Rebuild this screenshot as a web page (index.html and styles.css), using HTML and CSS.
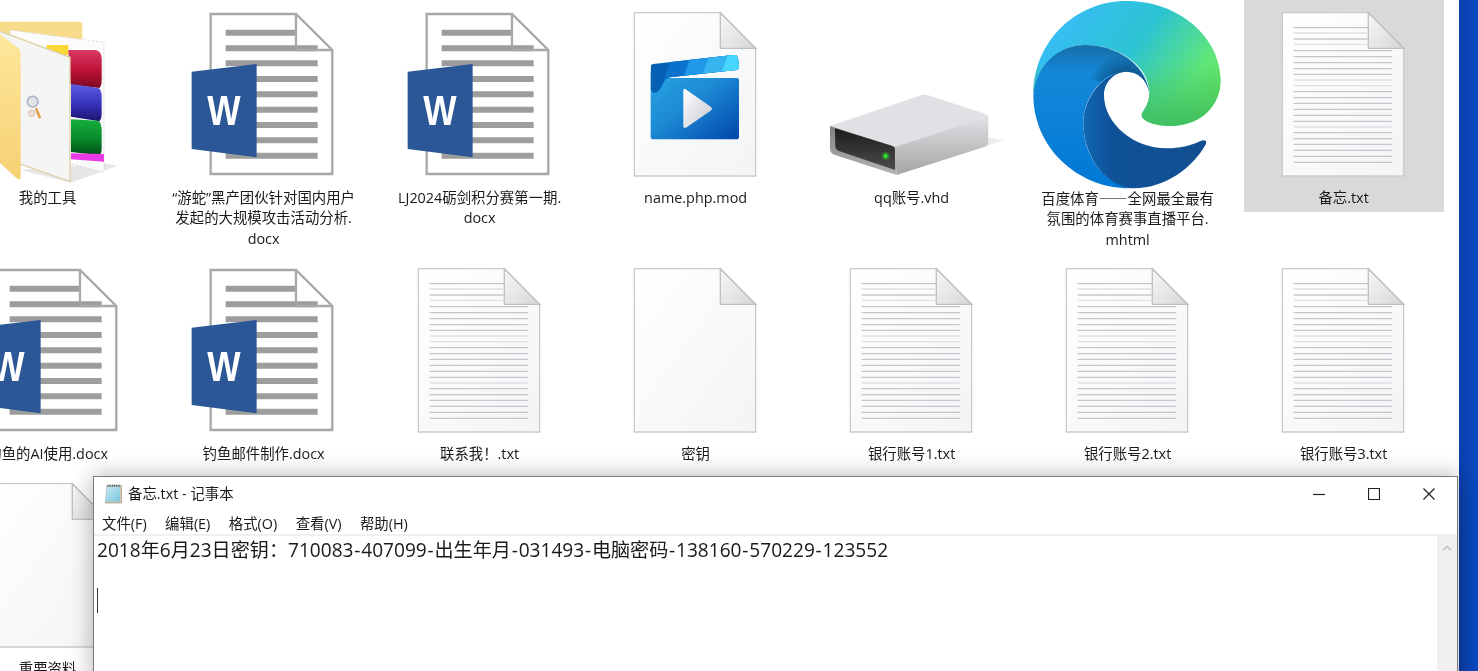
FILE: index.html
```html
<!DOCTYPE html>
<html lang="zh-CN">
<head>
     <meta charset="UTF-8">
     <meta name="viewport" content="width=device-width, initial-scale=1.0">
     <title>备忘.txt - 记事本</title>
     <link rel="stylesheet" href="styles.css">
</head>
<body>
     <!-- icons used more than once -->
     <svg class="defs" aria-hidden="true">
          <defs>
               <linearGradient id="paper" x1="0" y1="0" x2="1" y2="1">
                    <stop offset="0" stop-color="#ffffff"/>
                    <stop offset="1" stop-color="#f3f4f6"/>
               </linearGradient>
               <linearGradient id="fold" x1="0" y1="0" x2="1" y2="1">
                    <stop offset="0" stop-color="#f8f8f8"/>
                    <stop offset="1" stop-color="#d6d6d6"/>
               </linearGradient>
               <linearGradient id="video-body" x1="0" y1="0" x2="1" y2="1">
                    <stop offset="0" stop-color="#2aa6e2"/>
                    <stop offset=".45" stop-color="#1c8ad4"/>
                    <stop offset="1" stop-color="#0046ab"/>
               </linearGradient>
               <linearGradient id="play" x1="0" y1="0" x2="1" y2="1">
                    <stop offset="0" stop-color="#ffffff"/>
                    <stop offset="1" stop-color="#c4c8cf"/>
               </linearGradient>
               <clipPath id="clapper-shape">
                    <path d="M92 200Q92 193 100 192L340 165Q352 164 354 175L357 200Q358 208 348 210L150 232Q135 235 130 250L120 268Q112 280 100 278Q92 275 92 265Z"/>
               </clipPath>
               <linearGradient id="hdd-side" x1="0" y1="0" x2="0" y2="1">
                    <stop offset="0" stop-color="#e0e1e4"/>
                    <stop offset="1" stop-color="#a4a4a6"/>
               </linearGradient>
               <linearGradient id="hdd-front" x1="0" y1="0" x2="0" y2="1">
                    <stop offset="0" stop-color="#808080"/>
                    <stop offset="1" stop-color="#b4b4b4"/>
               </linearGradient>
               <linearGradient id="hdd-dark" x1="0" y1="0" x2="0" y2="1">
                    <stop offset="0" stop-color="#1c1c1c"/>
                    <stop offset="1" stop-color="#4c4c4c"/>
               </linearGradient>
               <linearGradient id="edge-top" x1="0" y1=".2" x2="1" y2=".7">
                    <stop offset="0" stop-color="#3abcfd"/>
                    <stop offset=".5" stop-color="#2cc3d2"/>
                    <stop offset=".85" stop-color="#5fe67a"/>
                    <stop offset="1" stop-color="#62e460"/>
               </linearGradient>
               <linearGradient id="edge-low" x1="0" y1="0" x2="0" y2="1">
                    <stop offset=".5" stop-color="#3fbf62" stop-opacity="0"/>
                    <stop offset="1" stop-color="#3fbf62"/>
               </linearGradient>
               <linearGradient id="edge-blue" x1="0" y1="0" x2="0" y2="1">
                    <stop offset="0" stop-color="#166fa8"/>
                    <stop offset=".2" stop-color="#1488d8"/>
                    <stop offset="1" stop-color="#0078d6"/>
               </linearGradient>
               <radialGradient id="edge-shade" gradientUnits="userSpaceOnUse" cx="320" cy="285" r="125">
                    <stop offset=".55" stop-color="#0c4a78" stop-opacity=".75"/>
                    <stop offset="1" stop-color="#0c4a78" stop-opacity="0"/>
               </radialGradient>
               <linearGradient id="edge-dark" x1="0" y1="0" x2="1" y2="0">
                    <stop offset="0" stop-color="#1068b4"/>
                    <stop offset=".22" stop-color="#0f5298"/>
                    <stop offset="1" stop-color="#124f90"/>
               </linearGradient>
               <linearGradient id="red" x1="0" y1="0" x2="0" y2="1">
                    <stop offset="0" stop-color="#d93a62"/>
                    <stop offset=".55" stop-color="#bc1038"/>
                    <stop offset="1" stop-color="#7c0a20"/>
               </linearGradient>
               <linearGradient id="violet" x1="0" y1="0" x2="0" y2="1">
                    <stop offset="0" stop-color="#5d5de4"/>
                    <stop offset=".55" stop-color="#3532b8"/>
                    <stop offset="1" stop-color="#1c1470"/>
               </linearGradient>
               <linearGradient id="green" x1="0" y1="0" x2="0" y2="1">
                    <stop offset="0" stop-color="#14ae3a"/>
                    <stop offset=".55" stop-color="#0a8a2c"/>
                    <stop offset="1" stop-color="#004c16"/>
               </linearGradient>
               <linearGradient id="folder" x1="0" y1="0" x2="0" y2="1">
                    <stop offset="0" stop-color="#fee89c"/>
                    <stop offset="1" stop-color="#f6d074"/>
               </linearGradient>
               <linearGradient id="pad" x1="0" y1="0" x2="1" y2="1">
                    <stop offset="0" stop-color="#c4eaf4"/>
                    <stop offset="1" stop-color="#7cc4dc"/>
               </linearGradient>
          </defs>

          <symbol id="page" viewBox="0 0 200 188">
               <g transform="translate(-224 0) scale(.3333)">
                    <path class="page-sheet" d="M787 38H1045L1151 145V528H787Z"/>
                    <path class="page-fold" d="M1045 38V145H1151Z"/>
               </g>
          </symbol>

          <symbol id="txt" viewBox="0 0 200 188">
               <use href="#page"/>
               <g transform="translate(-224 0) scale(.3333)">
                    <path class="txt-dark" d="M821 83H1045M821 117H1045M821 152H1117M821 170H1117M821 188H1117M821 206H1117M821 223H1117M821 275H1117M821 293H1117M821 310H1117M821 328H1117M821 346H1117M821 364H1117M821 398H1117M821 416H1117M821 433H1117M821 451H1117M821 469H1117M821 487H1117"/>
                    <path class="txt-light" d="M821 99H1045M821 133H1045M821 240H1117M821 257H1117M821 381H1117"/>
               </g>
          </symbol>

          <symbol id="word" viewBox="0 0 200 188">
               <g transform="translate(-164 0) scale(.3333)">
                    <path class="word-sheet" d="M632 42H888L997 150V522H632Z"/>
                    <path class="word-lines" d="M677 98H888M677 145H953M677 190H953M677 237H953M677 283H953M677 329H953M677 375H953M677 421H953M677 467H953"/>
                    <path class="word-sheet-fold" d="M888 42V150H997"/>
                    <path class="word-cover" d="M575 215L770 192V472L575 447Z"/>
                    <text class="word-w" x="622" y="376" textLength="100" lengthAdjust="spacingAndGlyphs">W</text>
               </g>
          </symbol>
     </svg>

     <div class="desktop">
          <div class="explorer">
               <div class="file-grid">
                    <div class="file">
                         <svg class="file-icon" viewBox="0 0 200 188">
                              <g transform="translate(52 0) scale(.3333)">
                                   <path class="folder-shadow" d="M62 510L212 548L352 498L312 490Z"/>
                                   <path class="folder-back" d="M-10 65H238Q247 65 247 75V150H-10Z"/>
                                   <path class="folder-sheet" d="M30 90L312 127V517L210 490L30 450Z"/>
                                   <path class="folder-tag" d="M140 135H205V165H140Z"/>
                                   <path fill="url(#red)" d="M205 150H288Q305 155 305 175V240Q305 258 298 264L212 254Z"/>
                                   <path fill="url(#violet)" d="M213 252L295 264Q305 270 305 290V340Q305 358 298 364L213 350Z"/>
                                   <path fill="url(#green)" d="M213 358L295 362Q305 370 305 390V445Q305 462 298 466L213 456Z"/>
                                   <path class="folder-strip" d="M213 460L312 462V485L213 478Z"/>
                                   <path class="folder-front" d="M-5 92L210 172V545L55 490L-5 470Z"/>
                                   <path fill="url(#folder)" d="M-10 95L55 145Q62 150 62 165V530Q62 545 50 535L-10 480Z"/>
                                   <circle class="lens" cx="98" cy="305" r="16"/>
                                   <circle class="lens-low" cx="95" cy="340" r="10"/>
                                   <path class="lens-handle" d="M108 325L120 355"/>
                              </g>
                         </svg>
                         <div class="file-name">我的工具</div>
                    </div>
                    <div class="file">
                         <svg class="file-icon"><use href="#word"/></svg>
                         <div class="file-name">“游蛇”黑产团伙针对国内用户<br>发起的大规模攻击活动分析.<br>docx</div>
                    </div>
                    <div class="file">
                         <svg class="file-icon"><use href="#word"/></svg>
                         <div class="file-name">LJ2024砺剑积分赛第一期.<br>docx</div>
                    </div>
                    <div class="file">
                         <svg class="file-icon" viewBox="0 0 200 188">
                              <use href="#page"/>
                              <g transform="translate(24 0) scale(.3333)">
                                   <path fill="url(#video-body)" d="M92 215H135V234H351Q357 234 357 240V412Q357 418 351 418H98Q92 418 92 412Z"/>
                                   <g clip-path="url(#clapper-shape)">
                                        <path class="stripe-1" d="M80 150H370V290H80Z"/>
                                        <path class="stripe-2" d="M160 160H370V240H132Z"/>
                                        <path class="stripe-3" d="M215 160H370V240H187Z"/>
                                        <path class="stripe-4" d="M270 160H370V240H242Z"/>
                                        <path class="stripe-5" d="M325 160H370V240H297Z"/>
                                   </g>
                                   <path fill="url(#play)" d="M190 272Q190 262 200 270L272 320Q280 326 272 332L200 382Q190 388 190 378Z"/>
                              </g>
                         </svg>
                         <div class="file-name">name.php.mod</div>
                    </div>
                    <div class="file">
                         <svg class="file-icon" viewBox="0 0 200 188">
                              <g transform="translate(-192 0) scale(.3333)">
                                   <path class="hdd-shadow" d="M1105 412L1150 420L1105 437Z"/>
                                   <path class="hdd-top" d="M630 378L905 285Q915 282 925 286L1090 340Q1105 345 1105 352L825 440Z"/>
                                   <path fill="url(#hdd-side)" d="M825 440L1105 350V430Q1105 437 1095 440L830 525Z"/>
                                   <path fill="url(#hdd-front)" d="M630 378L825 440L830 525L645 465Q630 460 630 445Z"/>
                                   <path fill="url(#hdd-dark)" d="M645 385L815 437Q825 440 825 450V510L655 452Q646 448 646 440Z"/>
                                   <circle class="led-glow" cx="797" cy="468" r="12"/>
                                   <circle class="led" cx="797" cy="468" r="6"/>
                              </g>
                         </svg>
                         <div class="file-name">qq账号.vhd</div>
                    </div>
                    <div class="file">
                         <svg class="file-icon" viewBox="0 0 200 188">
                              <g transform="translate(-8 0) scale(.3333)">
                                   <path fill="url(#edge-top)" d="M40 280C42 125 165 3 320 3C480 3 602 115 602 240C602 320 540 378 450 378C410 378 365 365 365 345C365 332 388 318 388 278C388 200 300 135 195 135C120 135 60 190 40 280Z"/>
                                   <path fill="url(#edge-low)" d="M40 280C42 125 165 3 320 3C480 3 602 115 602 240C602 320 540 378 450 378C410 378 365 365 365 345C365 332 388 318 388 278C388 200 300 135 195 135C120 135 60 190 40 280Z"/>
                                   <path fill="url(#edge-blue)" d="M40 285C50 190 120 135 195 135C290 135 375 190 388 278C380 240 355 215 320 215C260 215 190 280 190 370C190 470 250 545 330 565C170 565 40 440 40 285Z"/>
                                   <path fill="url(#edge-shade)" d="M195 135C290 135 375 190 388 278C380 240 355 215 320 215C290 215 262 226 240 245L190 230Z"/>
                                   <path fill="url(#edge-dark)" d="M320 215C260 212 190 285 190 370C190 480 270 565 340 565C440 565 520 500 558 432C562 420 552 418 540 424C510 438 480 445 440 445C340 445 252 370 252 285C252 245 285 215 320 215Z"/>
                              </g>
                         </svg>
                         <div class="file-name">百度体育<span class="dash">——</span>全网最全最有<br>氛围的体育赛事直播平台.<br>mhtml</div>
                    </div>
                    <div class="file selected">
                         <svg class="file-icon"><use href="#txt"/></svg>
                         <div class="file-name">备忘.txt</div>
                    </div>

                    <div class="file">
                         <svg class="file-icon"><use href="#word"/></svg>
                         <div class="file-name">钓鱼的AI使用.docx</div>
                    </div>
                    <div class="file">
                         <svg class="file-icon"><use href="#word"/></svg>
                         <div class="file-name">钓鱼邮件制作.docx</div>
                    </div>
                    <div class="file">
                         <svg class="file-icon"><use href="#txt"/></svg>
                         <div class="file-name">联系我！.txt</div>
                    </div>
                    <div class="file">
                         <svg class="file-icon"><use href="#page"/></svg>
                         <div class="file-name">密钥</div>
                    </div>
                    <div class="file">
                         <svg class="file-icon"><use href="#txt"/></svg>
                         <div class="file-name">银行账号1.txt</div>
                    </div>
                    <div class="file">
                         <svg class="file-icon"><use href="#txt"/></svg>
                         <div class="file-name">银行账号2.txt</div>
                    </div>
                    <div class="file">
                         <svg class="file-icon"><use href="#txt"/></svg>
                         <div class="file-name">银行账号3.txt</div>
                    </div>

                    <div class="file">
                         <svg class="file-icon"><use href="#page"/></svg>
                         <div class="file-name">重要资料</div>
                    </div>
               </div>
          </div>
          <div class="wallpaper"></div>

          <div class="notepad">
               <div class="notepad-title">
                    <svg class="notepad-icon" viewBox="0 0 18 20">
                         <path class="pad-edge" d="M3 1.5H17.5V19H1.5Z"/>
                         <path fill="url(#pad)" d="M3 2.5H16V17.5H1.5Z"/>
                         <path class="pad-rings" d="M4 .5V3M6.2 .5V3M8.4 .5V3M10.6 .5V3M12.8 .5V3M15 .5V3"/>
                    </svg>
                    <span class="notepad-name">备忘.txt - 记事本</span>
                    <div class="window-buttons">
                         <svg class="window-btn" viewBox="0 0 12 12"><path d="M0 6.5H12"/></svg>
                         <svg class="window-btn" viewBox="0 0 12 12"><path d="M.5 .5H11.5V11.5H.5Z"/></svg>
                         <svg class="window-btn" viewBox="0 0 12 12"><path d="M.5 .5L11.5 11.5M11.5 .5L.5 11.5"/></svg>
                    </div>
               </div>
               <div class="notepad-menu">
                    <span>文件(F)</span>
                    <span>编辑(E)</span>
                    <span>格式(O)</span>
                    <span>查看(V)</span>
                    <span>帮助(H)</span>
               </div>
               <div class="notepad-body">
                    <div class="notepad-text">
                         <div class="text-line">2018年6月23日密钥：710083<span class="hy">-</span>407099<span class="hy">-</span>出生年月<span class="hy">-</span>031493<span class="hy">-</span>电脑密码<span class="hy">-</span>138160<span class="hy">-</span>570229<span class="hy">-</span>123552</div>
                         <div class="text-line"></div>
                         <div class="text-line"><span class="caret"></span></div>
                    </div>
                    <div class="scrollbar">
                         <svg class="scroll-up" viewBox="0 0 10 6"><path d="M1 5L5 1.5L9 5"/></svg>
                    </div>
               </div>
          </div>
     </div>
</body>
</html>
```

FILE: styles.css
```css
html, body{
     margin: 0;
     height: 100%;
     overflow: hidden;
     background: white;
}
.defs{
     position: absolute;
     width: 0;
     height: 0;
}
.desktop{
     position: relative;
     display: flex;
     height: 671px;
     overflow: hidden;
     font-family: "Open Sans", "Noto Sans CJK SC", sans-serif;
     color: #1a1a1a;
     filter: blur(.35px);
}
.explorer{
     flex: 1;
     overflow: hidden;
     background: white;
}
.wallpaper{
     width: 18.7px;
     background: linear-gradient(90deg, #0b3fae, #0a4cc0);
}

/* file icons */
.file-grid{
     display: grid;
     grid-template-columns: repeat(7, 200px);
     grid-template-rows: 255.6px 215px 200px;
     column-gap: 16px;
     margin-left: -52.4px;
}
.file{
     align-self: start;
     padding-bottom: 4px;
     text-align: center;
}
.selected{
     background: #d9d9d9;
}
.file-icon{
     display: block;
     width: 200px;
     height: 188px;
     overflow: visible;
}
.file-name{
     font-size: 14.4px;
     line-height: 20.4px;
     height: 20px;
     white-space: nowrap;
}
.dash{
     font-family: "Noto Sans CJK SC", sans-serif;
}

.page-sheet{
     fill: url(#paper);
     stroke: #cbcbcb;
     stroke-width: 4;
}
.page-fold{
     fill: url(#fold);
     stroke: #bfbfbf;
     stroke-width: 4;
}
.txt-dark{
     stroke: #c6c7ca;
     stroke-width: 4;
}
.txt-light{
     stroke: #e0e1e4;
     stroke-width: 4;
}
.word-sheet{
     fill: white;
     stroke: #a8a8a8;
     stroke-width: 7;
}
.word-sheet-fold{
     fill: none;
     stroke: #a8a8a8;
     stroke-width: 7;
}
.word-lines{
     stroke: #9d9d9d;
     stroke-width: 18;
}
.word-cover{
     fill: #2b5797;
}
.word-w{
     font-family: "Liberation Sans", sans-serif;
     font-size: 130px;
     font-weight: bold;
     fill: white;
}

.folder-shadow{ fill: #e6e6e6; }
.folder-back{ fill: #f8dc8c; }
.folder-sheet{
     fill: #fbfbfb;
     stroke: #cfcfcf;
     stroke-width: 2;
     stroke-dasharray: 8 5;
}
.folder-tag{ fill: #fdd835; }
.folder-strip{ fill: #ea3ae8; }
.folder-front{
     fill: #f5f5f5;
     stroke: #dcd2a8;
     stroke-width: 4;
}
.lens{
     fill: #e6e4e6;
     stroke: #a9b5c9;
     stroke-width: 5;
}
.lens-low{
     fill: #eedcd8;
     stroke: #d8c0b8;
     stroke-width: 3;
}
.lens-handle{
     stroke: #e0a050;
     stroke-width: 8;
}

.stripe-1{ fill: #0661b4; }
.stripe-2{ fill: #0a72cc; }
.stripe-3{ fill: #1f98e8; }
.stripe-4{ fill: #35b4f0; }
.stripe-5{ fill: #48d6ff; }

.hdd-shadow{ fill: #ededed; }
.hdd-top{ fill: #e0e1e4; }
.led{ fill: #2ee62e; }
.led-glow{ fill: rgba(40, 220, 40, .35); }

/* notepad window */
.notepad{
     position: absolute;
     left: 93px;
     top: 476px;
     width: 1363px;
     height: 300px;
     border: 1px solid #7a7a7a;
     background: white;
     box-shadow: 0 0 22px rgba(0, 0, 0, .3);
}
.notepad-title{
     display: flex;
     align-items: center;
     height: 33px;
     padding-left: 10px;
}
.notepad-icon{
     width: 18px;
     height: 20px;
     margin-right: 6px;
}
.pad-edge{ fill: #d8c8a8; stroke: #8a8a80; stroke-width: .6; }
.pad-rings{ stroke: #4e5860; stroke-width: .9; }
.notepad-name{
     margin-bottom: 2px;
     font-size: 14.4px;
}
.window-buttons{
     display: flex;
     gap: 43px;
     margin-left: auto;
     margin-right: 22px;
}
.window-btn{
     width: 12px;
     height: 12px;
     fill: none;
     stroke: #222222;
     stroke-width: 1.2;
}
.notepad-menu{
     display: flex;
     gap: 18.4px;
     align-items: center;
     height: 24px;
     padding-left: 8px;
     font-size: 14.4px;
     border-bottom: 2px solid #f0f0f0;
}
.notepad-body{
     display: flex;
     height: 240px;
}
.notepad-text{
     flex: 1;
     padding: 2px 0 0 3px;
     font-size: 19.1px;
}
.text-line{
     height: 24.8px;
     line-height: 24.8px;
     white-space: nowrap;
}
.hy{
     padding: 0 .8px;
}
.caret{
     display: inline-block;
     width: 1px;
     height: 25px;
     vertical-align: top;
     background: #333333;
}
.scrollbar{
     width: 20px;
     background: #f0f0f0;
     text-align: center;
}
.scroll-up{
     display: block;
     width: 10px;
     height: 6px;
     margin: 9px auto 0;
     fill: none;
     stroke: #c8c8c8;
     stroke-width: 2;
}
```
